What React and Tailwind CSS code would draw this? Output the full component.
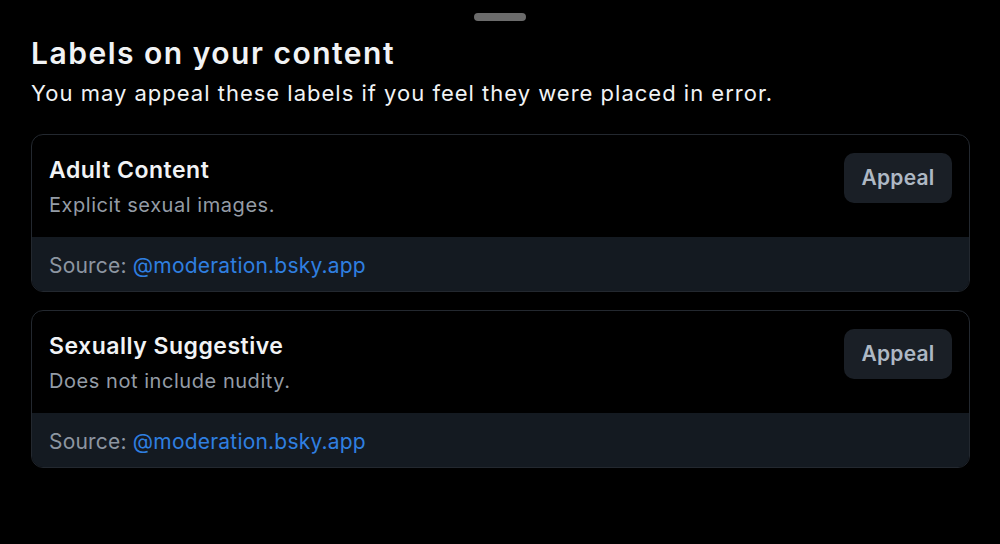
export default function App() {
  const labels = [
    { title: "Adult Content", desc: "Explicit sexual images." },
    { title: "Sexually Suggestive", desc: "Does not include nudity." },
  ];
  return (
    <div
      className="w-[1000px] h-[544px] bg-black overflow-hidden flex flex-col"
      style={{ fontFamily: "Inter, 'Noto Sans', sans-serif" }}
    >
      <div className="flex justify-center pt-[13px]">
        <div className="w-[52px] h-[8px] rounded-full bg-[#6b6b6b]" />
      </div>
      <div className="pl-[31px] pr-[30px] pt-[14px]">
        <h1 className="text-[30px] leading-[36px] font-semibold text-[#f1f3f5] tracking-[1.5px]">
          Labels on your content
        </h1>
        <p className="text-[22px] leading-[30px] text-[#f1f3f5] mt-[7px] tracking-[1px]">
          You may appeal these labels if you feel they were placed in error.
        </p>
        <div className="flex flex-col gap-[18px] mt-[26px]">
          {labels.map((l) => (
            <div
              key={l.title}
              className="border border-[#23282f] rounded-[12px] overflow-hidden"
            >
              <div className="flex justify-between items-start pl-[17px] pr-[17px] pt-[18px] h-[102px]">
                <div className="flex flex-col pt-[2px]">
                  <div className="text-[23px] leading-[30px] font-semibold text-[#f1f3f5] tracking-[0.5px]">
                    {l.title}
                  </div>
                  <div className="text-[20px] leading-[26px] text-[#949ca6] mt-[7px] tracking-[0.55px]">
                    {l.desc}
                  </div>
                </div>
                <button className="w-[108px] h-[50px] rounded-[10px] bg-[#1a1f26] text-[#aeb8c4] text-[21px] font-semibold tracking-[0.2px]">
                  Appeal
                </button>
              </div>
              <div className="bg-[#141a21] h-[54px] flex items-center pt-[3px] px-[17px] text-[21px] tracking-[0.2px]">
                <span className="text-[#8d96a1]">Source:&nbsp;</span>
                <span className="text-[#2f7fe0]">@moderation.bsky.app</span>
              </div>
            </div>
          ))}
        </div>
      </div>
    </div>
  );
}
